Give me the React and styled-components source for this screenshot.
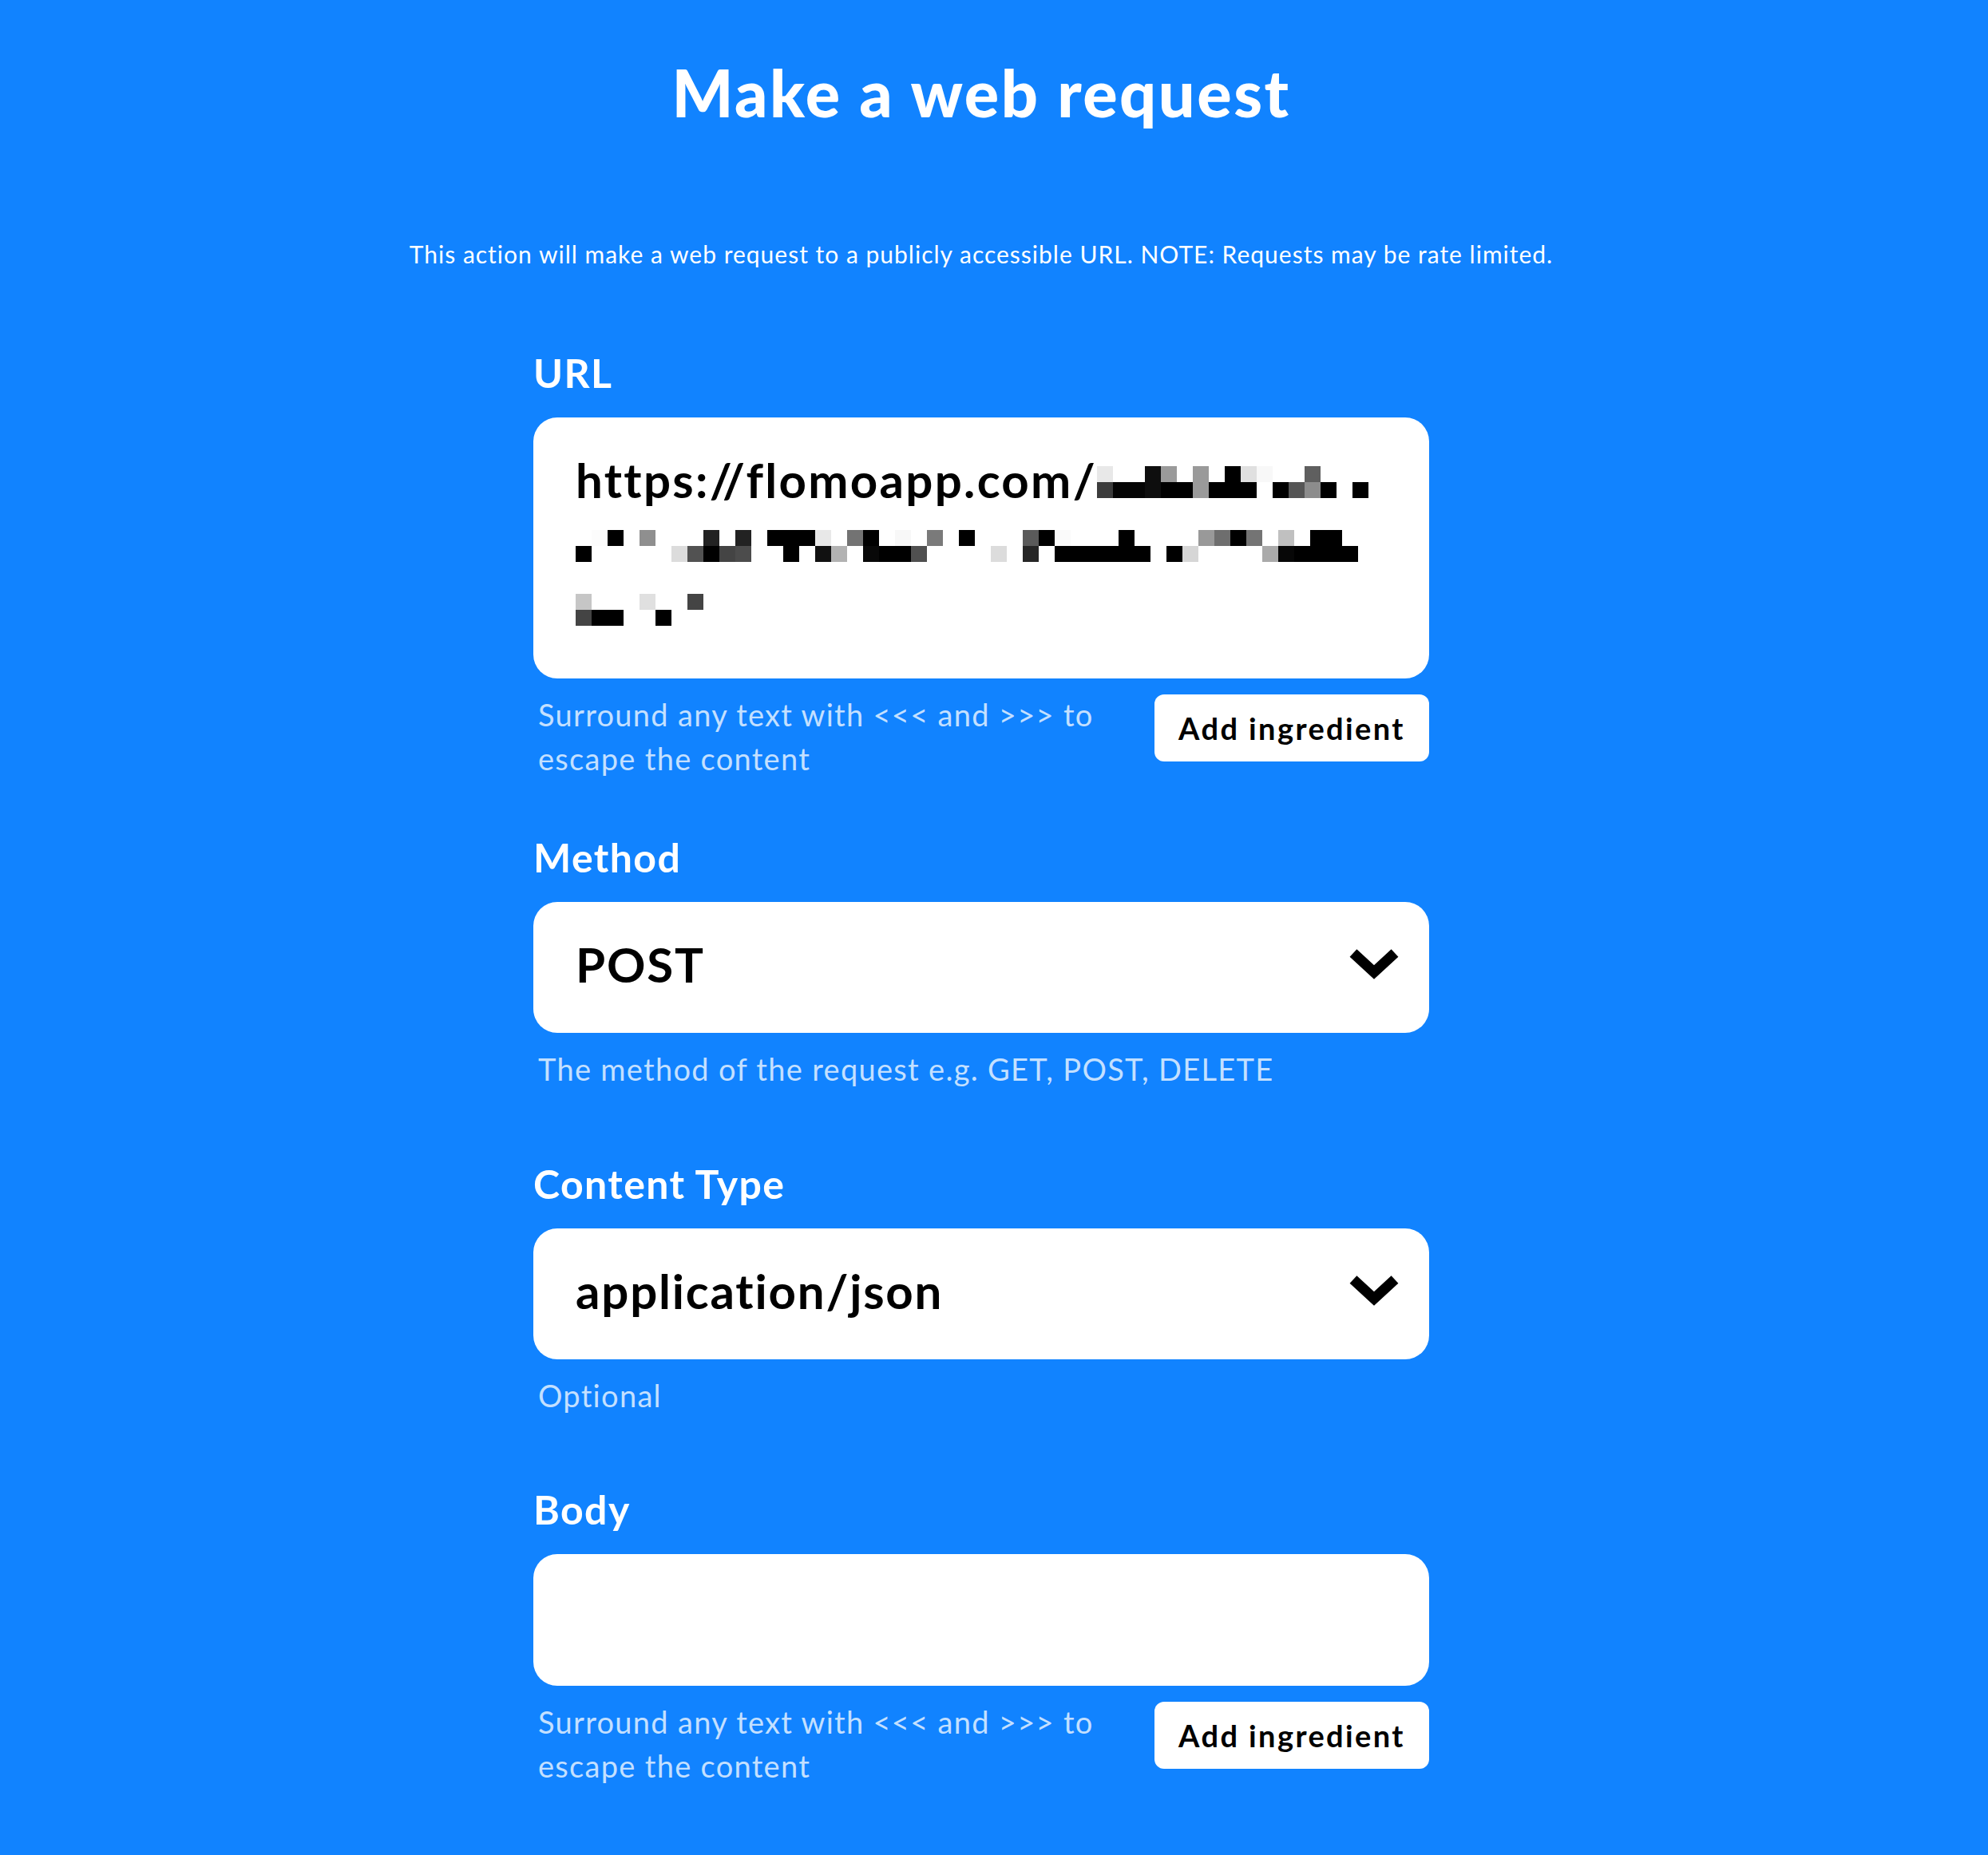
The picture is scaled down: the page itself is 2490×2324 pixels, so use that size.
import React from "react";
import styled, { createGlobalStyle } from "styled-components";

const GlobalStyle = createGlobalStyle`
  body {
    margin: 0;
    background: #1183ff;
  }
`;

// obfuscated part of the url, one string per block row, two hex digits = grey level
const URL_MASK = [
  [
    "e8 . . 0e 9a . 9a . 00 e0 f8 . . 5f . . .",
    "3c 05 05 0e 00 00 9a 00 00 00 . 00 55 8c 00 . 00"
  ],
  [
    ". fc 00 . 8f . . . 22 . 22 . 00 00 00 e8 . 73 00 . f8 . 7a . 00 . . . 5a 00 fa . . . 00 . . . . 99 6e 00 74 . c0 . 00 00 .",
    "00 . . . . . dc 52 00 44 4c . . 00 . 11 b2 . 08 00 00 50 . . . . dc . 26 . 00 00 00 00 00 00 . 00 d6 . . . . aa 07 00 00 00 00"
  ],
  ["c6 . . . e0 . . 44", "44 00 00 . . 00 . ."]
];

const Page = styled.div`
  min-height: 2324px;
  box-sizing: border-box;
  padding: 66px 32px 80px 0;
  background: #1183ff;
  font-family: Lato, "Open Sans", sans-serif;
  color: #fff;
`;

const Title = styled.h1`
  margin: 0;
  font-size: 81px;
  line-height: 100px;
  font-weight: 900;
  letter-spacing: 2.5px;
  text-align: center;
`;

const Lead = styled.p`
  margin: 132px 0 0;
  font-size: 30px;
  line-height: 40px;
  letter-spacing: 1px;
  text-align: center;
`;

const Form = styled.div`
  width: 1122px;
  margin: 0 auto;
  display: flex;
  flex-direction: column;
`;

const Field = styled.div`
  margin-top: ${p => p.$top}px;
`;

const Label = styled.div`
  font-size: 50px;
  line-height: 60px;
  font-weight: 700;
  letter-spacing: 1.4px;
  margin-bottom: 26px;
`;

const TextBox = styled.div`
  box-sizing: border-box;
  min-height: ${p => p.$height}px;
  padding: 38px 53px;
  background: #fff;
  border-radius: 30px;
  color: #000;
  font-size: 60px;
  line-height: 80px;
  font-weight: 700;
  letter-spacing: 2.3px;
`;

const MaskSvg = styled.svg`
  display: inline-block;
  vertical-align: baseline;
  shape-rendering: crispEdges;
`;

const SelectBox = styled.div`
  box-sizing: border-box;
  height: 164px;
  padding: 0 37px 8px 53px;
  display: flex;
  align-items: center;
  justify-content: space-between;
  background: #fff;
  border-radius: 30px;
  color: #000;
`;

const SelectValue = styled.span`
  font-size: 60px;
  font-weight: 700;
  line-height: 72px;
  letter-spacing: 1.8px;
`;

const HelpRow = styled.div`
  display: flex;
  justify-content: space-between;
  align-items: flex-start;
  gap: 30px;
  margin-top: 18px;
`;

const Help = styled.div`
  flex: 1;
  padding-left: 6px;
  font-size: 38px;
  line-height: 55px;
  letter-spacing: 1.3px;
  color: rgba(255, 255, 255, 0.76);
`;

const IngredientButton = styled.button`
  flex: none;
  width: 344px;
  height: 84px;
  margin-top: 2px;
  border: 0;
  border-radius: 12px;
  background: #fff;
  color: #000;
  font-family: inherit;
  font-size: 38px;
  font-weight: 700;
  letter-spacing: 2.4px;
`;

const Mask = ({ rows }) => {
  const cells = rows.map(r => r.split(" "));
  const cols = Math.max(...cells.map(r => r.length));
  return (
    <MaskSvg width={cols * 20} height={40} viewBox={`0 0 ${cols * 20} 40`}>
      {cells.flatMap((row, y) =>
        row.map((v, x) =>
          v === "." ? null : (
            <rect
              key={`${x}-${y}`}
              x={x * 20}
              y={y * 20}
              width={20}
              height={20}
              fill={`#${v}${v}${v}`}
            />
          )
        )
      )}
    </MaskSvg>
  );
};

const Chevron = () => (
  <svg width="64" height="44" viewBox="0 0 64 44">
    <polyline
      points="6,8 32,32 58,8"
      fill="none"
      stroke="#000"
      strokeWidth="13"
      strokeLinejoin="miter"
    />
  </svg>
);

const IngredientHelp = () => (
  <HelpRow>
    <Help>Surround any text with &lt;&lt;&lt; and &gt;&gt;&gt; to escape the content</Help>
    <IngredientButton type="button">Add ingredient</IngredientButton>
  </HelpRow>
);

export default function App() {
  return (
    <>
      <GlobalStyle />
      <Page>
        <Title>Make a web request</Title>
        <Lead>
          This action will make a web request to a publicly accessible URL. NOTE: Requests may be rate limited.
        </Lead>

        <Form>
          <Field $top={99}>
            <Label>URL</Label>
            <TextBox $height={327}>
              https://flomoapp.com/
              <Mask rows={URL_MASK[0]} />
              <br />
              <Mask rows={URL_MASK[1]} />
              <br />
              <Mask rows={URL_MASK[2]} />
            </TextBox>
            <IngredientHelp />
          </Field>

          <Field $top={66}>
            <Label>Method</Label>
            <SelectBox>
              <SelectValue>POST</SelectValue>
              <Chevron />
            </SelectBox>
            <HelpRow>
              <Help>The method of the request e.g. GET, POST, DELETE</Help>
            </HelpRow>
          </Field>

          <Field $top={86}>
            <Label>Content Type</Label>
            <SelectBox>
              <SelectValue>application/json</SelectValue>
              <Chevron />
            </SelectBox>
            <HelpRow>
              <Help>Optional</Help>
            </HelpRow>
          </Field>

          <Field $top={85}>
            <Label>Body</Label>
            <TextBox $height={165} />
            <IngredientHelp />
          </Field>
        </Form>
      </Page>
    </>
  );
}
